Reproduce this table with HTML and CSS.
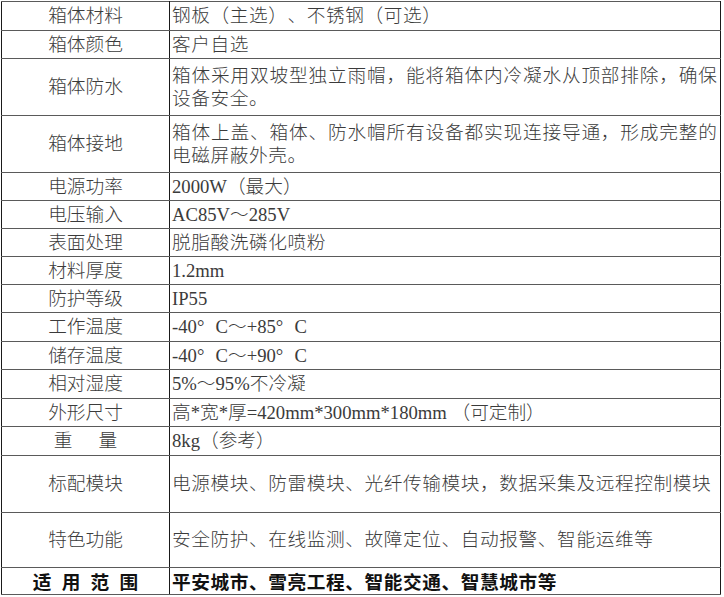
FILE: index.html
```html
<!DOCTYPE html>
<html lang="zh-CN">
<head>
<meta charset="utf-8">
<title>箱体参数</title>
<link rel="stylesheet" href="styles.css">
</head>
<body>
<table class="spec">
  <colgroup><col class="c-label"><col class="c-value"></colgroup>
  <tbody>
    <tr class="r-a"><td class="label">箱体材料</td><td class="value cjk">钢板（主选）、不锈钢（可选）</td></tr>
    <tr class="r-b"><td class="label">箱体颜色</td><td class="value cjk">客户自选</td></tr>
    <tr class="r-d"><td class="label">箱体防水</td><td class="value"><span class="jline">箱体采用双坡型独立雨帽，能将箱体内冷凝水从顶部排除，确保</span><span class="cjk">设备安全。</span></td></tr>
    <tr class="r-d"><td class="label">箱体接地</td><td class="value"><span class="jline">箱体上盖、箱体、防水帽所有设备都实现连接导通，形成完整的</span><span class="cjk">电磁屏蔽外壳。</span></td></tr>
    <tr class="r-b"><td class="label">电源功率</td><td class="value">2000W（最大）</td></tr>
    <tr class="r-b"><td class="label">电压输入</td><td class="value">AC85V～285V</td></tr>
    <tr class="r-b"><td class="label">表面处理</td><td class="value cjk">脱脂酸洗磷化喷粉</td></tr>
    <tr class="r-b"><td class="label">材料厚度</td><td class="value">1.2mm</td></tr>
    <tr class="r-a"><td class="label">防护等级</td><td class="value">IP55</td></tr>
    <tr class="r-a"><td class="label">工作温度</td><td class="value">-40<span class="deg">°</span>C～+85<span class="deg">°</span>C</td></tr>
    <tr class="r-a"><td class="label">储存温度</td><td class="value">-40<span class="deg">°</span>C～+90<span class="deg">°</span>C</td></tr>
    <tr class="r-a"><td class="label">相对湿度</td><td class="value">5%～95%不冷凝</td></tr>
    <tr class="r-a"><td class="label">外形尺寸</td><td class="value">高*宽*厚=420mm*300mm*180mm （可定制）</td></tr>
    <tr class="r-a"><td class="label">重<span class="gap"></span>量</td><td class="value">8kg（参考）</td></tr>
    <tr class="r-d"><td class="label">标配模块</td><td class="value cjk">电源模块、防雷模块、光纤传输模块，数据采集及远程控制模块</td></tr>
    <tr class="r-e"><td class="label">特色功能</td><td class="value cjk">安全防护、在线监测、故障定位、自动报警、智能运维等</td></tr>
    <tr class="r-f"><td class="label strong spaced">适 用 范 围</td><td class="value strong cjk">平安城市、雪亮工程、智能交通、智慧城市等</td></tr>
  </tbody>
</table>
</body>
</html>
```

FILE: styles.css
```css
html, body {
  margin: 0;
  padding: 0;
  background: #ffffff;
}

body {
  padding: 1px 0 0 1px;
  font-family: "Liberation Serif", "Noto Sans CJK SC", serif;
  font-size: 18.67px;
  font-weight: 300;
  color: #3b3b3b;
  text-spacing-trim: space-all;
}

.spec {
  border-collapse: collapse;
  table-layout: fixed;
  width: 719px;
}

.c-label { width: 168px; }
.c-value { width: 551px; }

.spec td {
  border-top: 1px solid #5a5a5a;
  border-bottom: 1px solid #5a5a5a;
  border-left: 1px solid #1a1a1a;
  border-right: 1px solid #1a1a1a;
  padding: 0;
  line-height: 23px;
  vertical-align: middle;
}

.r-a td { height: 27.5px; }
.r-b td { height: 27px; }
.r-d td { height: 56px; }
.r-e td { height: 54px; }
.r-f td { height: 26px; }

.label {
  text-align: center;
  padding-left: 2px;
}

.value {
  text-align: left;
  padding: 0 3px 0 2px !important;
}

.cjk {
  letter-spacing: 0.6px;
}

.jline {
  display: block;
  letter-spacing: 0;
  text-align: justify;
  text-align-last: justify;
}

.deg {
  display: inline-block;
  width: 1em;
}

.gap {
  display: inline-block;
  width: 26px;
}

.strong {
  font-weight: 700;
  color: #111111;
  font-family: "Noto Sans CJK SC", sans-serif;
}

.spaced {
  word-spacing: 6px;
}
```
